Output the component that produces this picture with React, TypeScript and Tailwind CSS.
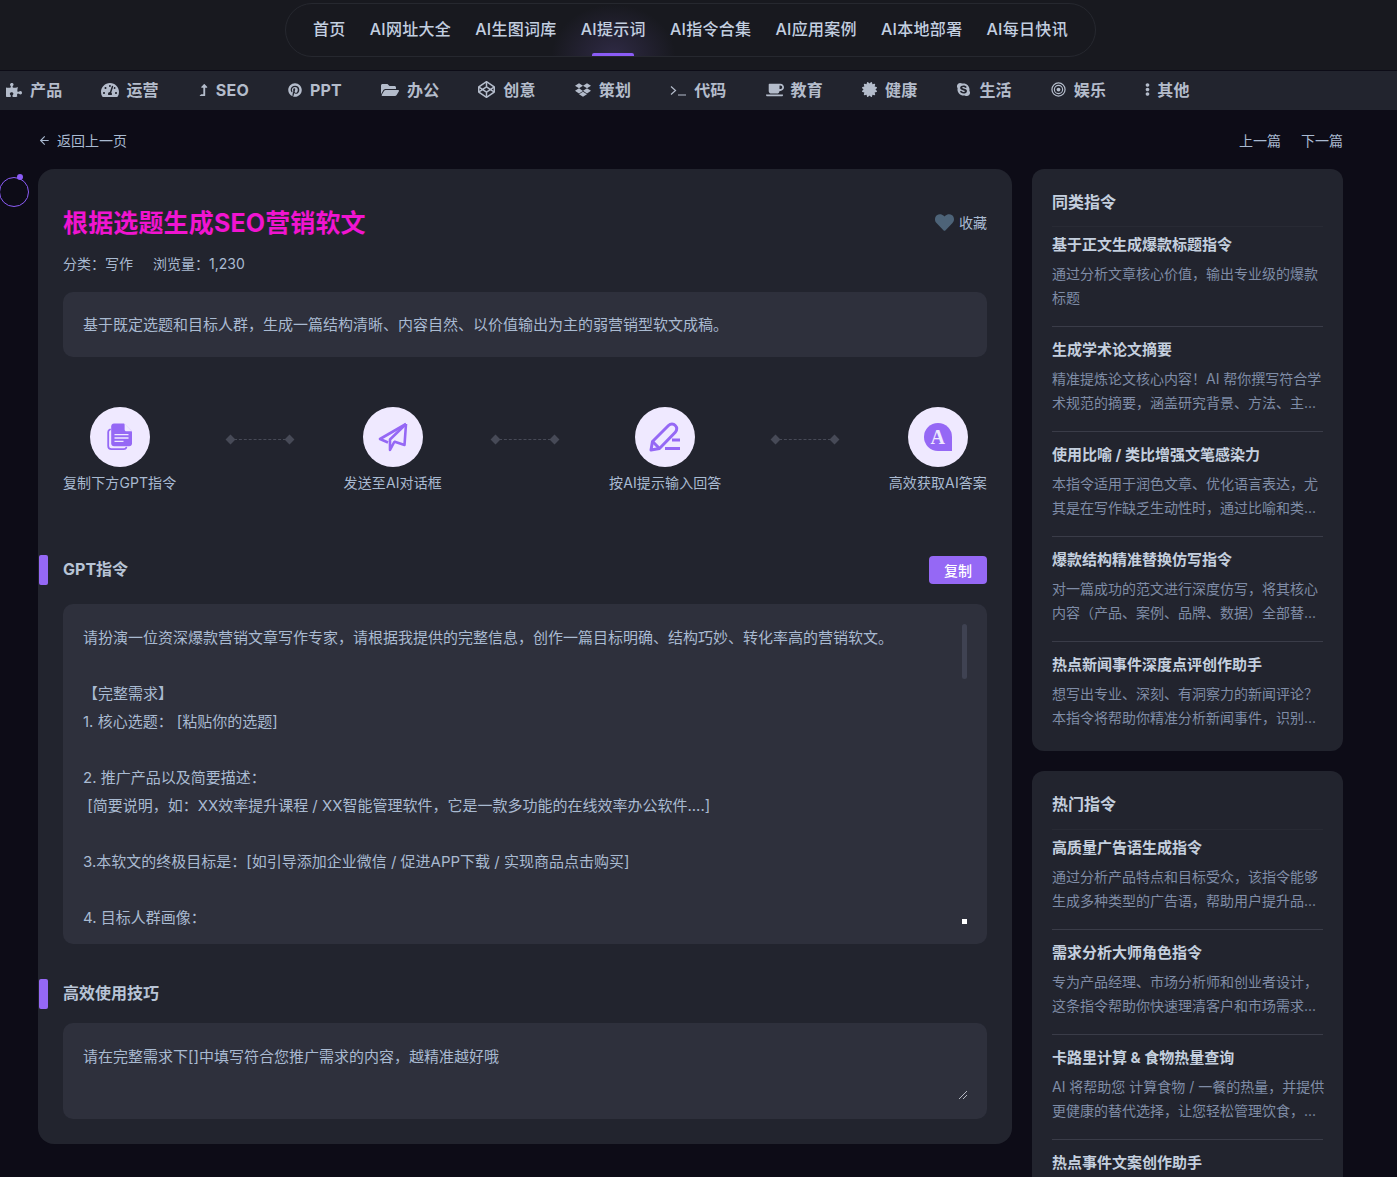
import { ArrowLeft } from 'lucide-react';
import {
  FaCertificate,
  FaCodepen,
  FaCoffee,
  FaDropbox,
  FaEllipsisV,
  FaFolderOpen,
  FaHeart,
  FaLevelUpAlt,
  FaPinterest,
  FaPuzzlePiece,
  FaSkype,
  FaTachometerAlt,
} from 'react-icons/fa';
import type { ReactNode } from 'react';

const navItems = ['首页', 'AI网址大全', 'AI生图词库', 'AI提示词', 'AI指令合集', 'AI应用案例', 'AI本地部署', 'AI每日快讯'];

function PromptGlyph() {
  return (
    <svg viewBox="0 0 16 12" className="h-[12px] w-[16px]" fill="none" stroke="currentColor" strokeWidth="1.2">
      <path d="M1 2.5 5.5 6.5 1 10.5M8 11h8" />
    </svg>
  );
}

function RingsGlyph() {
  return (
    <svg viewBox="0 0 16 16" className="h-[15px] w-[15px]" fill="none" stroke="currentColor">
      <circle cx="8" cy="8" r="7" strokeWidth="1.3" />
      <circle cx="8" cy="8" r="4.4" strokeWidth="1.2" />
      <circle cx="8" cy="8" r="2" fill="currentColor" stroke="none" />
    </svg>
  );
}

const categories: { label: string; slot: string; icon: ReactNode }[] = [
  { label: '产品', slot: 'w-[17px]', icon: <FaPuzzlePiece className="h-[16px] w-[16px]" /> },
  { label: '运营', slot: 'w-[18px]', icon: <FaTachometerAlt className="h-[18px] w-[18px]" /> },
  { label: 'SEO', slot: 'w-[11px]', icon: <FaLevelUpAlt className="h-[12px] w-[11px]" /> },
  { label: 'PPT', slot: 'w-[15px]', icon: <FaPinterest className="h-[14px] w-[14px]" /> },
  { label: '办公', slot: 'w-[19px]', icon: <FaFolderOpen className="h-[16px] w-[18px]" /> },
  { label: '创意', slot: 'w-[18px]', icon: <FaCodepen className="h-[17px] w-[17px]" /> },
  { label: '策划', slot: 'w-[17px]', icon: <FaDropbox className="h-[16px] w-[16px]" /> },
  { label: '代码', slot: 'w-[17px]', icon: <PromptGlyph /> },
  { label: '教育', slot: 'w-[18px]', icon: <FaCoffee className="h-[16px] w-[18px]" /> },
  { label: '健康', slot: 'w-[16px]', icon: <FaCertificate className="h-[15px] w-[15px]" /> },
  { label: '生活', slot: 'w-[16px]', icon: <FaSkype className="h-[15px] w-[15px]" /> },
  { label: '娱乐', slot: 'w-[16px]', icon: <RingsGlyph /> },
  { label: '其他', slot: 'w-[5px]', icon: <FaEllipsisV className="h-[13px] w-[5px]" /> },
];

const similar = [
  { title: '基于正文生成爆款标题指令', desc: '通过分析文章核心价值，输出专业级的爆款标题' },
  { title: '生成学术论文摘要', desc: '精准提炼论文核心内容！AI 帮你撰写符合学术规范的摘要，涵盖研究背景、方法、主...' },
  { title: '使用比喻 / 类比增强文笔感染力', desc: '本指令适用于润色文章、优化语言表达，尤其是在写作缺乏生动性时，通过比喻和类...' },
  { title: '爆款结构精准替换仿写指令', desc: '对一篇成功的范文进行深度仿写，将其核心内容（产品、案例、品牌、数据）全部替...' },
  { title: '热点新闻事件深度点评创作助手', desc: '想写出专业、深刻、有洞察力的新闻评论？本指令将帮助你精准分析新闻事件，识别...' },
];

const hot = [
  { title: '高质量广告语生成指令', desc: '通过分析产品特点和目标受众，该指令能够生成多种类型的广告语，帮助用户提升品...' },
  { title: '需求分析大师角色指令', desc: '专为产品经理、市场分析师和创业者设计，这条指令帮助你快速理清客户和市场需求...' },
  { title: '卡路里计算 & 食物热量查询', desc: 'AI 将帮助您 计算食物 / 一餐的热量，并提供更健康的替代选择，让您轻松管理饮食，...' },
  { title: '热点事件文案创作助手', desc: '' },
];

const promptText = `请扮演一位资深爆款营销文章写作专家，请根据我提供的完整信息，创作一篇目标明确、结构巧妙、转化率高的营销软文。

【完整需求】
1. 核心选题： [粘贴你的选题]

2. 推广产品以及简要描述：
 [简要说明，如：XX效率提升课程 / XX智能管理软件，它是一款多功能的在线效率办公软件....]

3.本软文的终极目标是：[如引导添加企业微信 / 促进APP下载 / 实现商品点击购买]

4. 目标人群画像：`;

function FileIcon() {
  return (
    <svg viewBox="0 0 26 28" className="h-[28px] w-[26px]" fill="none">
      <path d="M3 6.5C1.8 7 1.2 8 1.2 9v14c0 2 1.3 3.2 3.2 3.2h12.5c1.2 0 2-.6 2.4-1.6" stroke="#9568f5" strokeWidth="1.8" strokeLinecap="round" />
      <path d="M7 .6h10l8 8V20.5c0 1.6-1.2 2.8-2.8 2.8H7c-1.6 0-2.8-1.2-2.8-2.8V3.4C4.2 1.8 5.4.6 7 .6Z" fill="#9568f5" />
      <path d="M17.6.8v5.6c0 1 .8 1.8 1.8 1.8h5.4Z" fill="#efe9ff" />
      <path d="M7.5 11.6h14M7.5 15h14M7.5 18.4h9" stroke="#efe9ff" strokeWidth="1.3" />
    </svg>
  );
}

function PlaneIcon() {
  return (
    <svg viewBox="0 0 30 30" className="h-[30px] w-[30px]" fill="none" stroke="#9568f5" strokeWidth="2.6" strokeLinejoin="round">
      <path d="M28 2 2 17l8 3.5" />
      <path d="M28 2 26.5 23 16 19.5" />
      <path d="M28 2 12 17.5V28l4.5-8.5" />
    </svg>
  );
}

function PenIcon() {
  return (
    <svg viewBox="0 0 32 30" className="h-[30px] w-[32px]" fill="none">
      <path d="M2 28 3.5 19.5 19.5 3.5c2-2 5-2 6.8 0 1.9 1.8 1.9 4.8 0 6.8L10.5 26.5 2 28Z" stroke="#9568f5" strokeWidth="3" strokeLinejoin="round" />
      <path d="M3.5 19.5 10.5 26.5" stroke="#9568f5" strokeWidth="3" />
      <path d="M23 18h8M16 26.5h15" stroke="#9568f5" strokeWidth="3" />
    </svg>
  );
}

function BubbleIcon() {
  return (
    <div className="relative flex h-[28px] w-[28px] items-center justify-center rounded-full rounded-br-[2px] bg-[#9568f5]">
      <span className="font-['Liberation_Serif',serif] text-[20px] font-bold leading-none text-[#efe9ff]">A</span>
    </div>
  );
}

function Connector() {
  return (
    <div className="mt-[28px] flex h-[8px] w-[66px] items-center">
      <span className="h-[7px] w-[7px] shrink-0 rotate-45 bg-[#474a57]" />
      <span className="flex-1 border-t border-dashed border-[#474a57]" />
      <span className="h-[7px] w-[7px] shrink-0 rotate-45 bg-[#474a57]" />
    </div>
  );
}

function Step({ icon, label }: { icon: ReactNode; label: string }) {
  return (
    <div className="flex flex-col items-center">
      <div className="flex h-[60px] w-[60px] items-center justify-center rounded-full bg-[#efe9ff]">{icon}</div>
      <div className="mt-[6px] text-[14px] leading-[20px] tracking-[0.1px] text-[#a9bad1]">{label}</div>
    </div>
  );
}

function SectionHeading({ title, action }: { title: string; action?: ReactNode }) {
  return (
    <div className="-ml-[24px] flex h-[30px] items-center">
      <span className="h-[30px] w-[9px] rounded-[2px] bg-[#9568f5]" />
      <h2 className="-mt-[2px] ml-[15px] flex-1 text-[16px] font-bold text-[#b8c4d6]">{title}</h2>
      {action}
    </div>
  );
}

function SideCard({ title, headPad, items }: { title: string; headPad: string; items: { title: string; desc: string }[] }) {
  return (
    <div className="rounded-[12px] bg-[#22242e] px-[20px] pt-[20px] pb-[21px]">
      <h3 className={`border-b border-[#282a34] text-[16px] font-bold leading-[26px] text-[#c4cfde] ${headPad}`}>{title}</h3>
      {items.map((item, i) => (
        <div
          key={item.title}
          className={i < items.length - 1 ? 'border-b border-[#3a3c48] pt-[11px] pb-[16px] first-of-type:pt-[6px]' : 'pt-[11px]'}
        >
          <div className="truncate text-[15px] font-bold leading-[24px] text-[#c4cfde]">{item.title}</div>
          {item.desc && <p className="-mr-[2px] mt-[5px] text-[14px] leading-[24px] text-[#7f8ca6]">{item.desc}</p>}
        </div>
      ))}
    </div>
  );
}

export default function App() {
  return (
    <div className="relative h-[1177px] overflow-hidden bg-[#0d0c17] font-['Inter','Noto_Sans_CJK_SC',sans-serif]">
      <header className="h-[71px] border-b border-[#0d0c17] bg-[#18191f] pt-[3px]">
        <div className="flex w-[1381px] justify-center">
          <nav className="flex h-[54px] w-[811px] items-center justify-center gap-[24px] rounded-[27px] border border-[#26282f]">
            {navItems.map((item) => (
              <a
                key={item}
                className="relative flex h-full items-center pb-[2px] text-[16px] font-medium tracking-[0.3px] text-[#c3cfe0]"
              >
                {item === 'AI提示词' && (
                  <span className="absolute inset-y-0 -inset-x-[30px] bg-[radial-gradient(ellipse_at_bottom,#2f2a45_0%,transparent_70%)]" />
                )}
                <span className="relative">{item}</span>
                {item === 'AI提示词' && (
                  <span className="absolute bottom-0 left-1/2 h-[3px] w-[42px] -translate-x-1/2 rounded-t-[2px] bg-[#8b5cf6]" />
                )}
              </a>
            ))}
          </nav>
        </div>
      </header>

      <div className="flex h-[39px] items-center gap-[39px] bg-[#22242e] pb-[2px] pl-[6px] text-[#b4bccb]">
        {categories.map((cat) => (
          <a key={cat.label} className="flex items-center gap-[7px] text-[16px] font-bold tracking-[0.2px]">
            <span className={`flex shrink-0 justify-start ${cat.slot}`}>{cat.icon}</span>
            <span>{cat.label}</span>
          </a>
        ))}
      </div>

      <div className="ml-[38px] flex h-[59px] w-[1305px] items-center justify-between pt-[2px] text-[14px] text-[#a9bad1]">
        <a className="flex items-center gap-[6px]">
          <ArrowLeft className="h-[13px] w-[13px]" />
          返回上一页
        </a>
        <div className="flex gap-[20px]">
          <a>上一篇</a>
          <a>下一篇</a>
        </div>
      </div>

      <div className="absolute top-[177px] left-0 h-[30px] w-[30px] -translate-x-px rounded-full border border-[#8b5cf6]">
        <span className="absolute -top-[4px] right-[5px] h-[6px] w-[6px] rounded-full bg-[#8b5cf6]" />
      </div>

      <div className="ml-[38px] flex w-[1305px] items-start gap-[20px]">
        <main className="w-[974px] shrink-0 rounded-[16px] bg-[#22242e] px-[25px] pt-[39px] pb-[25px]">
          <div className="flex h-[32px] items-center justify-between">
            <h1 className="text-[25px] font-bold tracking-[0.15px] text-[#f014d0]">根据选题生成SEO营销软文</h1>
            <button className="-mt-[4px] flex items-center gap-[5px] text-[14px] text-[#a9bad1]">
              <FaHeart className="h-[19px] w-[19px] text-[#4d6378]" />
              收藏
            </button>
          </div>
          <div className="mt-[13px] flex h-[20px] items-center gap-[20px] text-[14px] text-[#a9bad1]">
            <span>分类：写作</span>
            <span>浏览量：1,230</span>
          </div>
          <div className="mt-[19px] flex h-[65px] items-center rounded-[10px] bg-[#2e303c] px-[20px] pt-[1px] text-[15px] text-[#a9bad1]">
            基于既定选题和目标人群，生成一篇结构清晰、内容自然、以价值输出为主的弱营销型软文成稿。
          </div>

          <div className="mt-[50px] flex justify-between">
            <Step icon={<FileIcon />} label="复制下方GPT指令" />
            <Connector />
            <Step icon={<PlaneIcon />} label="发送至AI对话框" />
            <Connector />
            <Step icon={<PenIcon />} label="按AI提示输入回答" />
            <Connector />
            <Step icon={<BubbleIcon />} label="高效获取AI答案" />
          </div>

          <div className="mt-[62px]">
            <SectionHeading
              title="GPT指令"
              action={
                <button className="h-[28px] w-[58px] rounded-[4px] bg-[#9568f5] text-[14px] font-medium text-white">复制</button>
              }
            />
          </div>

          <div className="relative mt-[19px] h-[340px] overflow-hidden rounded-[10px] bg-[#2e303c] p-[20px]">
            <div className="whitespace-pre-wrap pr-[60px] text-[15px] leading-[28px] text-[#a9bad1]">{promptText}</div>
            <span className="absolute top-[20px] right-[20px] h-[55px] w-[5px] rounded-full bg-[#3f4252]" />
            <span className="absolute right-[20px] bottom-[20px] h-[5px] w-[5px] bg-white" />
          </div>

          <div className="mt-[35px]">
            <SectionHeading title="高效使用技巧" />
          </div>

          <div className="relative mt-[14px] h-[96px] rounded-[10px] bg-[#2e303c] p-[20px] text-[15px] leading-[28px] text-[#a9bad1]">
            请在完整需求下[]中填写符合您推广需求的内容，越精准越好哦
            <svg viewBox="0 0 8 8" className="absolute right-[20px] bottom-[20px] h-[8px] w-[8px]" stroke="#b5b8c2" strokeWidth="1">
              <path d="M0 8 8 0M4 8 8 4" />
            </svg>
          </div>
        </main>

        <aside className="flex w-[311px] flex-col gap-[20px]">
          <SideCard title="同类指令" headPad="pb-[11px]" items={similar} />
          <SideCard title="热门指令" headPad="pb-[12px]" items={hot} />
        </aside>
      </div>
    </div>
  );
}
